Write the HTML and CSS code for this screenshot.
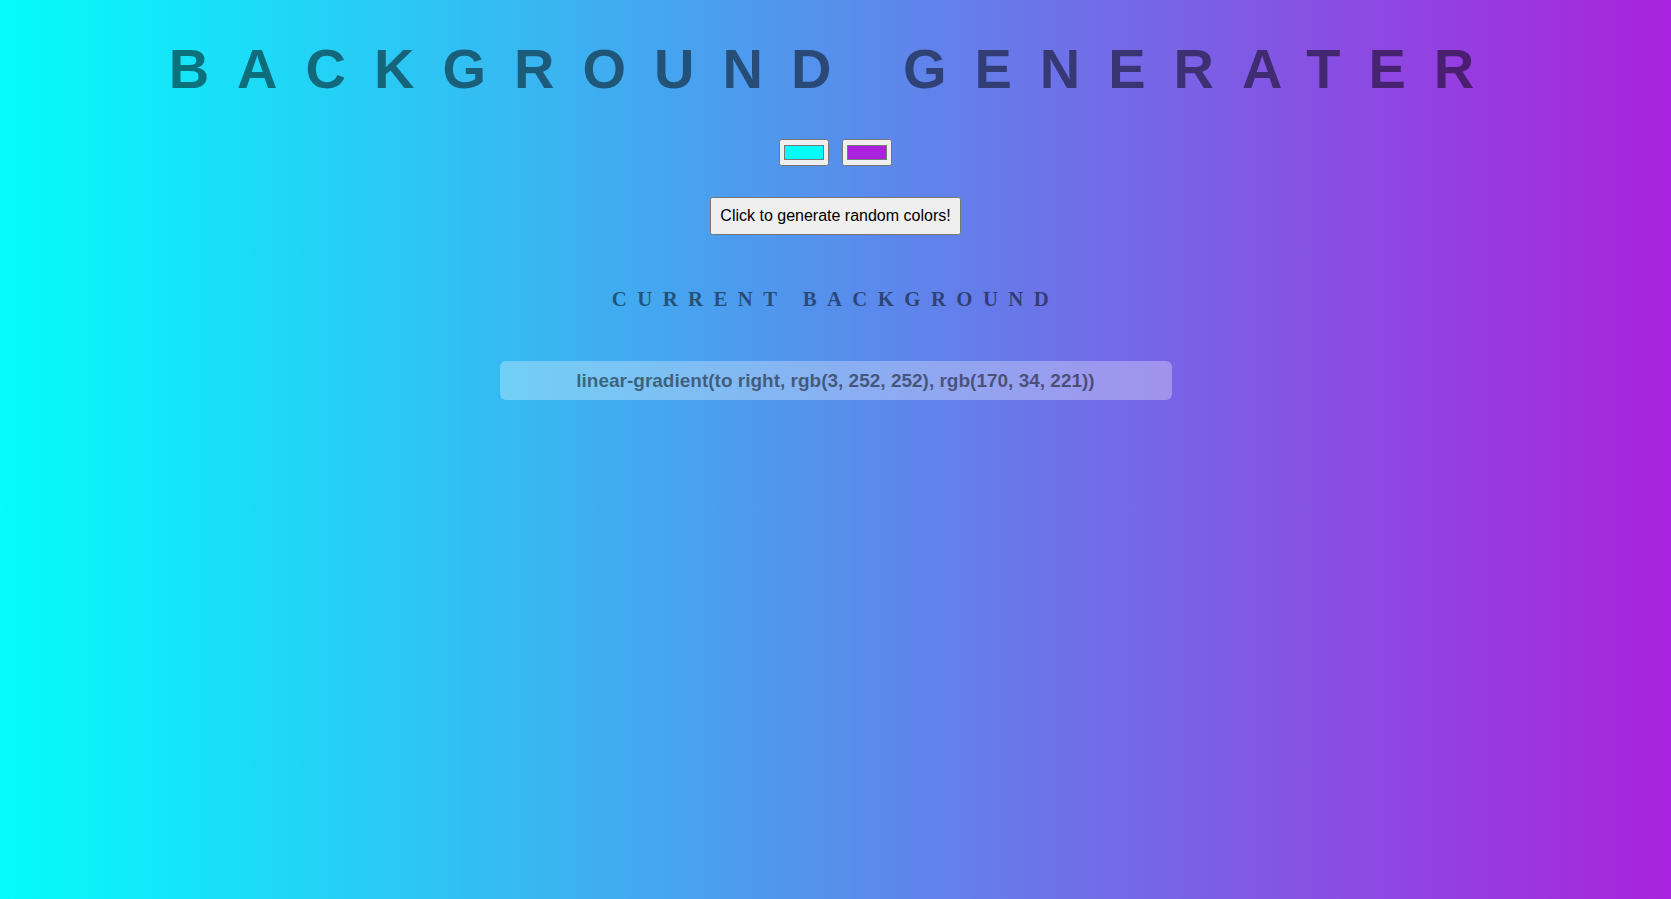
FILE: index.html
```html
<!DOCTYPE html>
<html>
<head>
<meta charset="utf-8">
<title>Background Generator</title>
<link rel="stylesheet" href="styles.css">
</head>
<body class="page">
  <h1 class="title">Background Generater</h1>
  <div class="pickers">
    <input class="picker" type="color" value="#03fcfc"> <input class="picker" type="color" value="#aa22dd">
  </div>
  <div class="actions">
    <button class="random-btn" type="button">Click to generate random colors!</button>
  </div>
  <h3 class="subtitle">Current Background</h3>
  <div class="code-box">linear-gradient(to right, rgb(3, 252, 252), rgb(170, 34, 221))</div>
</body>
</html>
```

FILE: styles.css
```css
html {
  min-height: 100%;
}

.page {
  margin: 8px;
  min-height: 883px;
  font-family: "Liberation Sans", Arial, sans-serif;
  font-size: 16px;
  color: rgba(0, 0, 0, 0.5);
  text-align: center;
  text-transform: uppercase;
  letter-spacing: 0.5em;
  background: linear-gradient(to right, rgb(3, 252, 252), rgb(170, 34, 221));
}

.title {
  margin: 29px 0 0;
  font: 700 56px/64px "Liberation Sans", Arial, sans-serif;
  letter-spacing: 0.5em;
  color: rgba(0, 0, 0, 0.5);
}

.pickers {
  margin-top: 38px;
  line-height: 27px;
  height: 27px;
}

.picker {
  vertical-align: top;
}

.actions {
  margin-top: 31px;
}

.random-btn {
  font: 16px "Liberation Sans", Arial, sans-serif;
  padding: 8px 8px;
}

.subtitle {
  margin: 52px 0 0;
  font: 700 20.8px/24px "Liberation Serif", "Times New Roman", serif;
  letter-spacing: 0.5em;
  color: rgba(0, 0, 0, 0.5);
}

.code-box {
  width: 672px;
  box-sizing: border-box;
  margin: 50px auto 0;
  padding: 9px 0;
  border-radius: 6px;
  background: rgba(255, 255, 255, 0.3);
  text-transform: none;
  letter-spacing: normal;
  font: 700 19px/21px "Liberation Sans", Arial, sans-serif;
  color: rgba(0, 0, 0, 0.5);
}
```
